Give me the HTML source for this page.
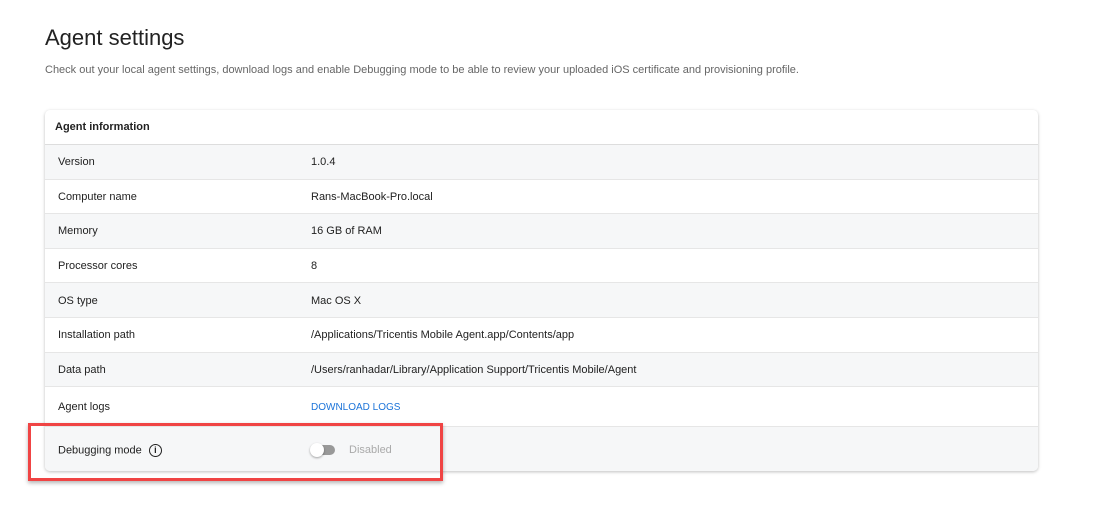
<!DOCTYPE html><html><head><style>
body{margin:0;width:1120px;height:512px;background:#fff;font-family:"Liberation Sans",sans-serif;color:#222;position:relative;overflow:hidden}
h1{position:absolute;left:45px;top:25px;margin:0;font-size:22px;font-weight:400;color:#222}
.sub{position:absolute;left:45px;top:64px;font-size:11px;color:#666}
.card{position:absolute;left:45px;top:110px;width:993px;height:361px;border-radius:5px;box-shadow:0 1px 3px rgba(0,0,0,.25);overflow:hidden;background:#fff}
.hd{height:34px;line-height:34px;padding-left:10px;font-size:11px;font-weight:700;border-bottom:1px solid #ddd}
.r{position:relative;border-bottom:1px solid #e6e6e6;font-size:11px;display:flex;align-items:center;box-sizing:border-box;padding-top:1px}
.r.g{background:#f6f7f8}
.r .l{position:absolute;left:13px}.r .v{position:absolute;left:266px}
.red{position:absolute;left:28px;top:423px;width:409px;height:52px;border:3px solid #f04444;box-shadow:0 2px 4px rgba(0,0,0,.3)}
</style></head><body>
<h1>Agent settings</h1>
<div class="sub">Check out your local agent settings, download logs and enable Debugging mode to be able to review your uploaded iOS certificate and provisioning profile.</div>
<div class="card">
<div class="hd">Agent information</div>
<div class="r g" style="height:34.6px"><span class="l">Version</span><span class="v">1.0.4</span></div>
<div class="r" style="height:34.6px"><span class="l">Computer name</span><span class="v">Rans-MacBook-Pro.local</span></div>
<div class="r g" style="height:34.6px"><span class="l">Memory</span><span class="v">16 GB of RAM</span></div>
<div class="r" style="height:34.6px"><span class="l">Processor cores</span><span class="v">8</span></div>
<div class="r g" style="height:34.6px"><span class="l">OS type</span><span class="v">Mac OS X</span></div>
<div class="r" style="height:34.6px"><span class="l">Installation path</span><span class="v">/Applications/Tricentis Mobile Agent.app/Contents/app</span></div>
<div class="r g" style="height:34.6px"><span class="l">Data path</span><span class="v">/Users/ranhadar/Library/Application Support/Tricentis Mobile/Agent</span></div>
<div class="r" style="height:40px"><span class="l">Agent logs</span><span class="v" style="color:#1a73d9;font-size:10px">DOWNLOAD LOGS</span></div>
<div class="r g" style="height:45px;border:none"><span class="l">Debugging mode <span style="display:inline-block;width:11px;height:11px;border:1.3px solid #222;border-radius:50%;font-size:9px;line-height:11px;text-align:center;vertical-align:middle;margin-left:4px;font-weight:700">i</span></span>
<span class="v" style="left:268px;top:18px;width:22px;height:10px;background:#999;border-radius:5px"></span>
<span class="v" style="left:265px;top:16px;width:14px;height:14px;background:#fff;border-radius:50%;box-shadow:0 1px 2px rgba(0,0,0,.35)"></span>
<span class="v" style="left:304px;color:#aaa">Disabled</span></div>
</div>
<div class="red"></div>
</body></html>
